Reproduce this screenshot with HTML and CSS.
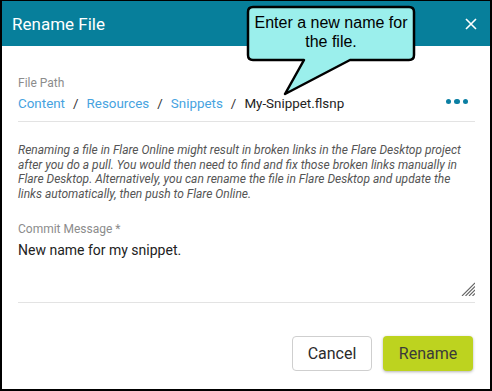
FILE: index.html
```html
<!DOCTYPE html>
<html lang="en">
<head>
    <meta charset="UTF-8">
    <title>Rename File</title>
    <link rel="stylesheet" href="styles.css">
</head>
<body>
    <div class="dialog">
        <div class="dialog-header">
            <span class="dialog-title">Rename File</span>
            <svg class="close-icon" width="12" height="12" viewBox="0 0 12 12">
                <path d="M1 1 L11 11 M11 1 L1 11" stroke="#fff" stroke-width="1.6" fill="none"/>
            </svg>
        </div>

        <div class="callout">
            <svg class="callout-shape" width="172" height="94" viewBox="0 0 172 94">
                <path d="M7,2 H163 Q168,2 168,7 V50 Q168,55 163,55 H104 L39,89 L58,55 H7 Q2,55 2,50 V7 Q2,2 7,2 Z"
                      fill="#9befec" stroke="#000" stroke-width="2.5" stroke-linejoin="round"/>
            </svg>
            <div class="callout-text">Enter a new name for<br>the file.</div>
        </div>

        <div class="dialog-body">
            <div class="field-label">File Path</div>
            <div class="path-row">
                <div class="breadcrumb">
                    <span class="crumb">Content</span>
                    <span class="sep">/</span>
                    <span class="crumb">Resources</span>
                    <span class="sep">/</span>
                    <span class="crumb">Snippets</span>
                    <span class="sep">/</span>
                    <span class="crumb-current">My-Snippet.flsnp</span>
                </div>
                <div class="more-dots"><i></i><i></i><i></i></div>
            </div>

            <p class="note">Renaming a file in Flare Online might result in broken links in the Flare Desktop project after you do a pull. You would then need to find and fix those broken links manually in Flare Desktop. Alternatively, you can rename the file in Flare Desktop and update the links automatically, then push to Flare Online.</p>

            <div class="field-label commit-label">Commit Message *</div>
            <div class="commit-field">
                <div class="commit-text">New name for my snippet.</div>
                <svg class="grip" width="14" height="14" viewBox="0 0 14 14">
                    <path d="M14 1 L1 14 M14 4.5 L4.5 14 M14 8 L8 14 M14 11.5 L11.5 14" stroke="#666" stroke-width="1.1" fill="none"/>
                </svg>
            </div>

            <div class="actions">
                <button class="btn btn-cancel">Cancel</button>
                <button class="btn btn-primary">Rename</button>
            </div>
        </div>
    </div>
</body>
</html>
```

FILE: styles.css
```css
html, body {
    margin: 0;
    padding: 0;
    background: #fff;
}
.dialog {
    position: relative;
    width: 488px;
    height: 388px;
    border: 2px solid #000;
    border-top-width: 1px;
    background: #fff;
    font-family: Roboto, "Liberation Sans", sans-serif;
    color: #222;
}
.dialog-header {
    display: flex;
    align-items: center;
    justify-content: space-between;
    height: 45px;
    padding: 0 13px 0 10px;
    background: #077f9b;
}
.dialog-title {
    color: #fff;
    font-size: 17px;
}
.close-icon {
    display: block;
}
.callout {
    position: absolute;
    left: 244px;
    top: 4px;
    width: 172px;
    height: 94px;
}
.callout-shape {
    display: block;
}
.callout-text {
    position: absolute;
    left: 2px;
    top: 9px;
    width: 166px;
    text-align: center;
    font-family: "Liberation Sans", Arial, sans-serif;
    font-size: 16px;
    line-height: 18.5px;
    color: #000;
}
.dialog-body {
    padding: 0 15px 0 16px;
}
.field-label {
    margin-top: 29px;
    font-size: 12px;
    line-height: 16px;
    color: #8c8c8c;
}
.path-row {
    display: flex;
    align-items: center;
    justify-content: space-between;
    margin-top: 2px;
    padding-bottom: 6px;
    border-bottom: 1px solid #e3e3e3;
}
.breadcrumb {
    display: flex;
    gap: 8px;
    font-size: 13.4px;
    line-height: 22px;
}
.crumb {
    color: #47a3df;
}
.sep {
    color: #333;
}
.crumb-current {
    color: #222;
}
.more-dots {
    display: flex;
    gap: 3px;
    margin: 0 7px 5px 0;
}
.more-dots i {
    display: block;
    width: 5.5px;
    height: 5.5px;
    border-radius: 50%;
    background: #0b7fa3;
}
.note {
    margin: 21px 0 0;
    font-size: 12px;
    line-height: 14.5px;
    font-style: italic;
    color: #555;
}
.commit-label {
    margin-top: 20px;
}
.commit-field {
    position: relative;
    height: 62px;
    margin-top: 3px;
    border-bottom: 1px solid #e3e3e3;
}
.commit-text {
    font-size: 14px;
    line-height: 20px;
    color: #222;
}
.grip {
    position: absolute;
    right: 0;
    bottom: 6px;
}
.actions {
    display: flex;
    justify-content: flex-end;
    gap: 11px;
    margin: 33px 2px 0 0;
}
.btn {
    height: 35px;
    border-radius: 4px;
    font-family: Roboto, "Liberation Sans", sans-serif;
    font-size: 16px;
    color: #2b2b2b;
    cursor: pointer;
}
.btn-cancel {
    width: 80px;
    background: #fff;
    border: 1px solid #cfcfcf;
}
.btn-primary {
    width: 90px;
    background: #bdd31f;
    border: none;
    color: #3a3a3a;
    box-shadow: 0 1px 3px rgba(0,0,0,0.3);
}
```
